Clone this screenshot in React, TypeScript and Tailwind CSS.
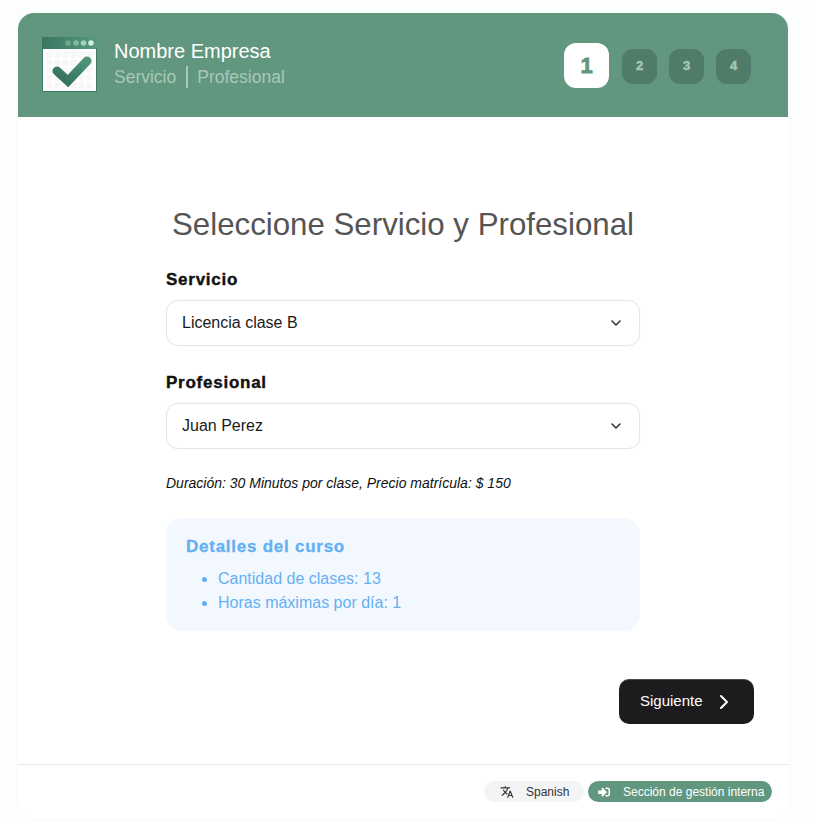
import { ChevronDown, ChevronRight } from "lucide-react";
import { FaSignInAlt } from "react-icons/fa";
import { MdTranslate } from "react-icons/md";

function Logo() {
  return (
    <svg width="55" height="55" viewBox="0 0 55 55" className="shrink-0 -mt-px">
      <defs>
        <linearGradient id="logoBar" x1="0" y1="0" x2="1" y2="0">
          <stop offset="0" stopColor="#3a7560" />
          <stop offset="1" stopColor="#559a7e" />
        </linearGradient>
        <linearGradient id="logoCheck" x1="0" y1="1" x2="1" y2="0">
          <stop offset="0" stopColor="#336f5c" />
          <stop offset="1" stopColor="#4f9678" />
        </linearGradient>
      </defs>
      <rect width="55" height="55" rx="1.5" fill="#3f7b66" />
      <rect x="1" y="12" width="53" height="42" fill="#ffffff" />
      <rect width="55" height="12" rx="1.5" fill="url(#logoBar)" />
      <circle cx="26" cy="6" r="2.8" fill="#6fa890" />
      <circle cx="34" cy="6" r="2.8" fill="#86b8a3" />
      <circle cx="41.500" cy="6" r="2.8" fill="#a7cfbd" />
      <circle cx="49" cy="6" r="2.8" fill="#d8ebe2" />
      {[0, 1, 2, 3, 4].map((r) =>
        [0, 1, 2, 3, 4, 5].map((c) => (
          <rect key={`${r}-${c}`} x={4.500 + c * 8} y={15 + r * 7.6} width="6" height="6" rx="1" fill="#f7f7f9" />
        ))
      )}
      <path d="M15 34 L26 44 L45 24" fill="none" stroke="url(#logoCheck)" strokeWidth="9" strokeLinecap="round" strokeLinejoin="miter" />
    </svg>
  );
}

function Step({ n, active }: { n: number; active?: boolean }) {
  if (active) {
    return (
      <div className="w-[45px] h-[45px] mr-px rounded-xl bg-white flex items-center justify-center text-[22px] font-bold text-[#62977f] [-webkit-text-stroke:0.8px_#62977f]">
        {n}
      </div>
    );
  }
  return (
    <div className="w-[35px] h-[35px] mt-[2px] rounded-[11px] bg-[#4e7c69] flex items-center justify-center text-[13px] font-bold text-[#a9c4b8] [-webkit-text-stroke:0.5px_#a9c4b8]">
      {n}
    </div>
  );
}

function SelectField({ label, value }: { label: string; value: string }) {
  return (
    <div>
      <div className="text-[17px] leading-6 font-bold text-[#111] tracking-[0.75px] [-webkit-text-stroke:0.4px_#111] mb-[8px]">{label}</div>
      <div className="h-[46px] rounded-xl border border-[#e5e5e8] bg-white flex items-center justify-between pl-[15px] pr-[15px] text-base text-[#1a1a1a] shadow-[0_0_2px_rgba(0,0,0,0.04)]">
        <span>{value}</span>
        <ChevronDown size={16} strokeWidth={2.4} className="text-[#333]" />
      </div>
    </div>
  );
}

export default function App() {
  return (
    <main className="min-h-[822px] bg-[#fcfdfd] pt-[13px] pb-[4px] pl-[18px] pr-[27px] font-['Liberation_Sans',Arial,sans-serif]">
      <div className="w-[770px] h-[805px] bg-white rounded-2xl shadow-[0_0_6px_rgba(0,0,0,0.015)] flex flex-col overflow-hidden">
        <header className="h-[104px] shrink-0 bg-[#62977f] flex items-center justify-between pl-6 pr-[37px]">
          <div className="flex items-center gap-[17px]">
            <Logo />
            <div className="-mt-[2px]">
              <div className="text-xl leading-[26px] text-white">Nombre Empresa</div>
              <div className="flex items-center text-[17.5px] leading-[26px] text-[#a9c8ba]">
                <span>Servicio</span>
                <span className="w-[2px] h-[22px] bg-[#a9c8ba] mx-[9.5px]" />
                <span>Profesional</span>
              </div>
            </div>
          </div>
          <div className="flex items-center gap-3">
            <Step n={1} active />
            <Step n={2} />
            <Step n={3} />
            <Step n={4} />
          </div>
        </header>

        <section className="flex-1 pt-[88px] px-[148px] relative">
          <h1 className="text-[31.25px] leading-10 text-center text-[#555] whitespace-nowrap mb-[23px]">
            Seleccione Servicio y Profesional
          </h1>
          <div className="space-y-[25px]">
            <SelectField label="Servicio" value="Licencia clase B" />
            <SelectField label="Profesional" value="Juan Perez" />
          </div>
          <p className="mt-[24px] text-sm leading-5 italic text-[#111]">
            Duración: 30 Minutos por clase, Precio matrícula: $ 150
          </p>
          <div className="mt-[25px] h-[113px] rounded-2xl bg-[#f3f8fe] pt-[17px] px-5 text-[#64b0f4]">
            <div className="text-[17px] leading-6 font-bold tracking-[0.75px] [-webkit-text-stroke:0.3px_#64b0f4]">Detalles del curso</div>
            <ul className="mt-[8px] pl-[32px] list-disc text-base leading-6">
              <li>Cantidad de clases: 13</li>
              <li>Horas máximas por día: 1</li>
            </ul>
          </div>
          <div className="flex justify-end mt-[48px] -mr-[114px]">
            <button className="w-[135px] h-[45px] rounded-[10px] bg-[#1c1c1e] text-white text-[15px] flex items-center pl-[21px] gap-[9px] shadow-[inset_0_1px_0_rgba(255,255,255,0.2)]">
              Siguiente
              <ChevronRight size={24} strokeWidth={2} />
            </button>
          </div>
        </section>

        <footer className="h-[54px] shrink-0 border-t border-[#e8e8ea] flex items-start justify-end gap-1 pt-4 pr-4 text-xs">
          <div className="w-[100px] h-[21px] rounded-full bg-[#f3f4f6] text-[#333] flex items-center pl-[16px] gap-[12px]">
            <MdTranslate size={14} />
            <span>Spanish</span>
          </div>
          <div className="w-[184px] h-[21px] rounded-full bg-[#62977f] text-white flex items-center pl-[10px] gap-[13px]">
            <FaSignInAlt size={12} />
            <span>Sección de gestión interna</span>
          </div>
        </footer>
      </div>
    </main>
  );
}
